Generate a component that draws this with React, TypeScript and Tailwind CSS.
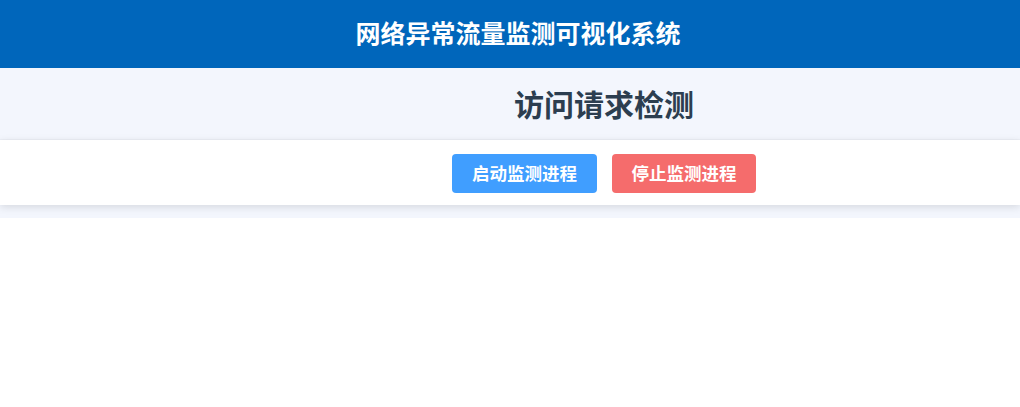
import React from "react";

const font = { fontFamily: '"Noto Sans CJK SC", "Noto Sans", sans-serif' };

export default function App() {
  return (
    <div className="min-h-screen bg-white" style={font}>
      {/* Top bar */}
      <header className="h-[68px] bg-[#0066bb] flex items-center justify-center pl-4 pb-[2px]">
        <h1 className="text-[25px] font-bold text-white">网络异常流量监测可视化系统</h1>
      </header>

      {/* Page title */}
      <section className="h-[72px] bg-[#f3f6fd] flex items-center pl-[188px] border-b border-[#eceff6]">
        <h2 className="flex-1 text-center text-[30px] font-bold text-[#2c3e50]">访问请求检测</h2>
      </section>

      {/* Controls */}
      <div className="bg-[#f3f6fd] pb-[13px]">
        <div className="h-[65px] bg-white shadow-[0_2px_8px_rgba(0,0,0,0.12)] flex items-start pt-[14px] pl-[188px]">
          <div className="flex-1 flex justify-center gap-[15px]">
            <button className="h-[39px] w-[145px] rounded-[4px] bg-[#409eff] text-white text-[17.5px] font-bold">
              启动监测进程
            </button>
            <button className="h-[39px] w-[144px] rounded-[4px] bg-[#f56c6c] text-white text-[17.5px] font-bold">
              停止监测进程
            </button>
          </div>
        </div>
      </div>
    </div>
  );
}
